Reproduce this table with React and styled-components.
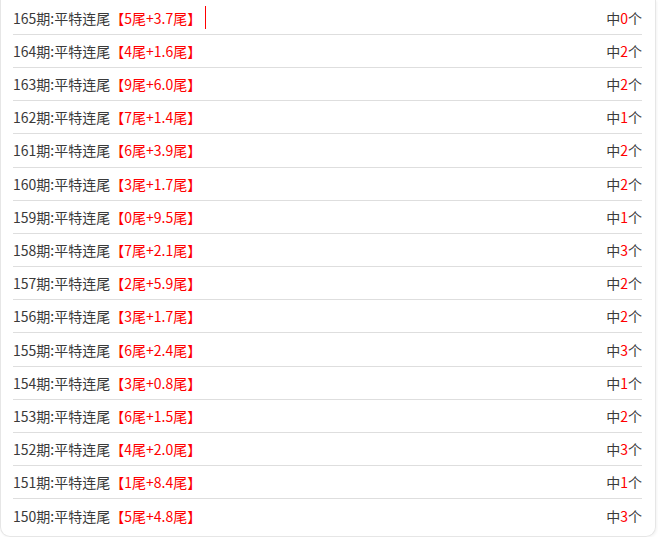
import styled, { createGlobalStyle } from "styled-components";

const GlobalStyle = createGlobalStyle`
  html, body {
    margin: 0;
    padding: 0;
    background: #fff;
  }
`;

const rows = [
  [165, 5, "3.7", 0],
  [164, 4, "1.6", 2],
  [163, 9, "6.0", 2],
  [162, 7, "1.4", 1],
  [161, 6, "3.9", 2],
  [160, 3, "1.7", 2],
  [159, 0, "9.5", 1],
  [158, 7, "2.1", 3],
  [157, 2, "5.9", 2],
  [156, 3, "1.7", 2],
  [155, 6, "2.4", 3],
  [154, 3, "0.8", 1],
  [153, 6, "1.5", 2],
  [152, 4, "2.0", 3],
  [151, 1, "8.4", 1],
  [150, 5, "4.8", 3],
];

const Panel = styled.div`
  box-sizing: border-box;
  width: 656px;
  height: 537px;
  padding: 1.6px 13px 0 12px;
  border: 1px solid #e6e6e6;
  border-top: none;
  border-radius: 0 0 10px 10px;
  box-shadow: 1px 1px 3px rgba(0, 0, 0, 0.05);
  font-family: "Noto Sans CJK SC", "Noto Sans", sans-serif;
  font-size: 14px;
  color: #3a3a3a;
`;

const List = styled.ul`
  list-style: none;
  margin: 0;
  padding: 0;
`;

const Row = styled.li`
  box-sizing: border-box;
  height: 33.2px;
  display: flex;
  align-items: center;
  justify-content: space-between;
  border-bottom: ${(p) => (p.$last ? "none" : "1px solid #dedede")};
`;

const Title = styled.span`
  display: flex;
  align-items: center;
`;

const Red = styled.span`
  color: #f00;
`;

const Caret = styled.span`
  display: inline-block;
  width: 1px;
  height: 23px;
  margin-left: 4px;
  background: #f00;
`;

export default function App() {
  return (
    <>
      <GlobalStyle />
      <Panel>
        <List>
          {rows.map(([issue, tail, num, hit], i) => (
            <Row key={issue} $last={i === rows.length - 1}>
              <Title>
                {issue}期:平特连尾
                <Red>【{tail}尾+{num}尾】</Red>
                {i === 0 && <Caret />}
              </Title>
              <span>
                中<Red>{hit}</Red>个
              </span>
            </Row>
          ))}
        </List>
      </Panel>
    </>
  );
}
